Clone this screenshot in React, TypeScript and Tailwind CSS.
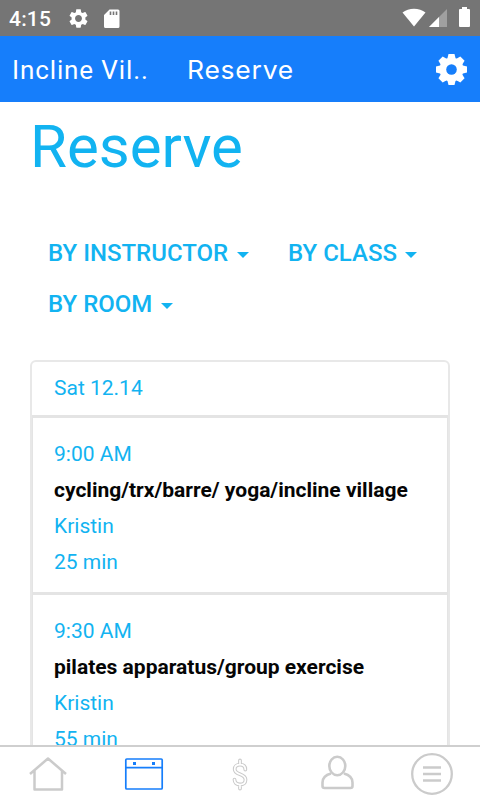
const filters = [
  { label: "BY INSTRUCTOR", width: "w-[240px]" },
  { label: "BY CLASS", width: "w-[144px]" },
  { label: "BY ROOM", width: "w-[144px]" },
];

const classes = [
  { time: "9:00 AM", name: "cycling/trx/barre/ yoga/incline village", instructor: "Kristin", duration: "25 min" },
  { time: "9:30 AM", name: "pilates apparatus/group exercise", instructor: "Kristin", duration: "55 min" },
];

const cog =
  "M19.14 12.94c.04-.3.06-.61.06-.94 0-.32-.02-.64-.07-.94l2.03-1.58c.18-.14.23-.41.12-.61l-1.92-3.32c-.12-.22-.37-.29-.59-.22l-2.39.96c-.5-.38-1.03-.7-1.62-.94l-.36-2.54c-.04-.24-.24-.41-.48-.41h-3.84c-.24 0-.43.17-.47.41l-.36 2.54c-.59.24-1.13.57-1.62.94l-2.39-.96c-.22-.08-.47 0-.59.22L2.74 8.87c-.12.21-.08.47.12.61l2.03 1.58c-.05.3-.09.63-.09.94s.02.64.07.94l-2.03 1.58c-.18.14-.23.41-.12.61l1.92 3.32c.12.22.37.29.59.22l2.39-.96c.5.38 1.03.7 1.62.94l.36 2.54c.05.24.24.41.48.41h3.84c.24 0 .44-.17.47-.41l.36-2.54c.59-.24 1.13-.56 1.62-.94l2.39.96c.22.08.47 0 .59-.22l1.92-3.32c.12-.22.07-.47-.12-.61l-2.01-1.58zM12 15.6c-1.98 0-3.6-1.62-3.6-3.6s1.62-3.6 3.6-3.6 3.6 1.62 3.6 3.6-1.62 3.6-3.6 3.6z";

const dollar = "M240 760.500v4M240 784.500v4M245.300 769.500c0-3-2-4.800-5.300-4.800s-5.300 1.800-5.300 4.500c0 6.200 10.800 4 10.800 10.500 0 3-2.200 4.800-5.500 4.800s-5.500-1.800-5.500-4.900";

function StatusBar() {
  return (
    <div className="flex h-9 shrink-0 items-center bg-[#757575] pl-[9px] pr-[10px] text-white">
      <span className="w-[58px] pt-px text-[21px] font-medium leading-9 tracking-[0.2px]">4:15</span>
      <svg width="23" height="23" viewBox="0 0 24 24" fill="white">
        <path d={cog} />
      </svg>
      <svg className="ml-[14px] mt-px" width="16" height="20" viewBox="0 0 16 20">
        <path d="M5.500 0.500H14a1.500 1.500 0 0 1 1.500 1.500v15.500a1.500 1.500 0 0 1-1.500 1.500H1.500a1.500 1.500 0 0 1-1.500-1.500V6z" fill="white" />
        <path d="M6.500 2.500v3.500M9.500 2.500v3.500M12.500 2.500v3.500" stroke="#757575" strokeWidth="1.600" />
      </svg>
      <div className="mb-0.5 ml-auto flex items-end">
        <svg width="24" height="19" viewBox="0 0 24 19" fill="white">
          <path d="M0.500 4.500C6.500-.6 17.500-.6 23.500 4.500L12 18.500z" />
        </svg>
        <svg className="ml-[3px]" width="18" height="18" viewBox="0 0 18 18">
          <path d="M18 0v18H0z" fill="#a0a0a0" />
          <path d="M10 8v10H0z" fill="white" />
        </svg>
        <svg className="ml-3" width="11" height="20" viewBox="0 0 11 20" fill="white">
          <path d="M3 0h5v2h2a1 1 0 0 1 1 1v16a1 1 0 0 1-1 1H1a1 1 0 0 1-1-1V3a1 1 0 0 1 1-1h2z" />
        </svg>
      </div>
    </div>
  );
}

function Toolbar() {
  return (
    <header className="flex h-[66px] shrink-0 items-center bg-[#167efb] pl-3 pr-3 text-white">
      <span className="w-[175px] whitespace-nowrap pt-0.5 text-[26px] leading-8 tracking-[0.88px]">Incline Vil..</span>
      <span className="origin-left scale-x-[1.06] whitespace-nowrap pt-px font-['Inter',sans-serif] text-[25px] leading-8 tracking-[0.7px]">
        Reserve
      </span>
      <svg className="ml-auto" width="33" height="33" viewBox="-16.500 -16.500 33 33">
        <g fill="white">
          <circle r="12" />
          {[0, 45, 90, 135].map((angle) => (
            <path key={angle} d="M-3-15.500h6l1 4v23l-1 4h-6l-1-4v-23z" transform={`rotate(${angle})`} />
          ))}
        </g>
        <circle r="5.300" fill="#167efb" />
      </svg>
    </header>
  );
}

function TabBar() {
  return (
    <nav className="grid h-[55px] shrink-0 grid-cols-5 border-t-2 border-[#cfcfcf] bg-white text-[#cbcbcb]">
      <svg width="96" height="53" viewBox="0 747 96 53" fill="none" stroke="currentColor" strokeWidth="2.500">
        <path d="M30 774L48 758.500L66 774M34.500 770v19.500h27.500V770" strokeLinejoin="round" />
      </svg>
      <svg width="96" height="53" viewBox="96 747 96 53" fill="none" stroke="#167efb" strokeWidth="1.700">
        <rect x="125.800" y="759" width="36.400" height="30" rx="1" />
        <path d="M126 767.700h36" />
        <path d="M133 763.500h3M152 763.500h3" strokeWidth="3" />
      </svg>
      <svg width="96" height="53" viewBox="192 747 96 53" fill="none">
        <path d={dollar} stroke="currentColor" strokeWidth="3.800" strokeLinecap="round" />
        <path d={dollar} stroke="white" strokeWidth="1.700" strokeLinecap="round" />
      </svg>
      <svg width="96" height="53" viewBox="288 747 96 53" fill="none" stroke="currentColor" strokeWidth="2.600">
        <ellipse cx="337.300" cy="766" rx="8" ry="9.200" />
        <path d="M331 773.500c-5.500 1.500-8.500 4.300-8.500 9v3.500q0 2 2 2h26q2 0 2-2v-3.500c0-4.700-3-7.500-8.600-9" />
      </svg>
      <svg width="96" height="53" viewBox="384 747 96 53" fill="none" stroke="currentColor" strokeWidth="2.300">
        <circle cx="432" cy="774" r="19.800" />
        <path d="M423 767.500h18M423 774h18M423 780.500h18" strokeWidth="2.400" />
      </svg>
    </nav>
  );
}

export default function App() {
  return (
    <div className="flex h-[800px] w-[480px] flex-col overflow-hidden bg-white font-['Roboto',sans-serif]">
      <StatusBar />
      <Toolbar />
      <main className="min-h-0 flex-1 overflow-hidden px-[30px] text-[#12b3f1]">
        <h1 className="pt-[9px] text-[60px] leading-[72px]">Reserve</h1>
        <div className="mt-11 flex flex-wrap px-[18px]">
          {filters.map((filter) => (
            <button key={filter.label} className={`flex h-[51px] items-center whitespace-nowrap text-[24px] font-medium ${filter.width}`}>
              {filter.label}
              <svg className="ml-[8.5px] mt-1" width="12" height="6" viewBox="0 0 12 6" fill="currentColor">
                <path d="M0 0h12L6 6z" />
              </svg>
            </button>
          ))}
        </div>
        <section className="mt-[31px] rounded-t-[6px] border-2 border-[#e8e8e8] text-[21px]">
          <h2 className="h-[53px] pl-[22px] leading-[53px]">Sat 12.14</h2>
          {classes.map((item) => (
            <article key={item.time} className="h-[177px] border-x border-t-[3px] border-[#e4e4e4] pl-[21px] pt-[18px] leading-9">
              <p>{item.time}</p>
              <p className="whitespace-nowrap font-bold text-[#050505]">{item.name}</p>
              <p>{item.instructor}</p>
              <p>{item.duration}</p>
            </article>
          ))}
        </section>
      </main>
      <TabBar />
    </div>
  );
}
